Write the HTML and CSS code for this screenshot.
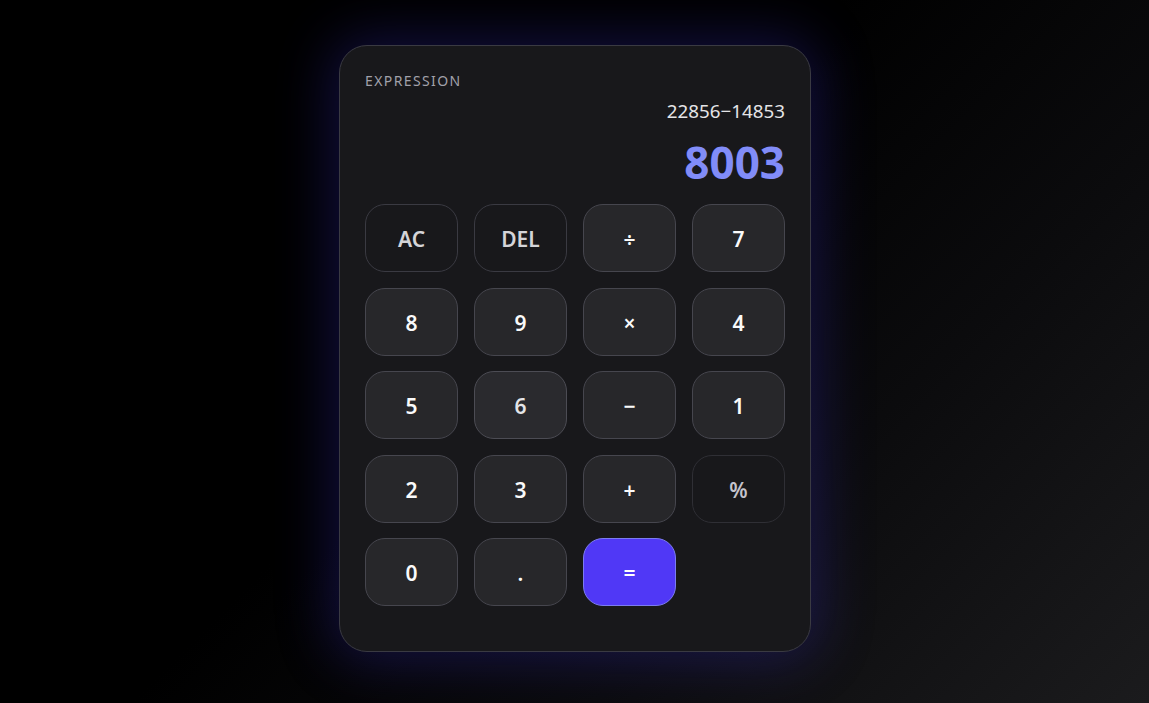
FILE: index.html
```html
<!DOCTYPE html>
<html lang="en">
<head>
<meta charset="utf-8">
<title>Calculator</title>
<link rel="stylesheet" href="styles.css">
</head>
<body>
<main class="calc">
  <section class="display">
    <div class="label">EXPRESSION</div>
    <div class="expr">22856−14853</div>
    <div class="result">8003</div>
  </section>
  <section class="keys">
    <button class="key key-fn">AC</button>
    <button class="key key-fn">DEL</button>
    <button class="key key-op">÷</button>
    <button class="key">7</button>
    <button class="key">8</button>
    <button class="key">9</button>
    <button class="key key-op">×</button>
    <button class="key">4</button>
    <button class="key">5</button>
    <button class="key key-hover">6</button>
    <button class="key key-op">−</button>
    <button class="key">1</button>
    <button class="key">2</button>
    <button class="key">3</button>
    <button class="key key-op">+</button>
    <button class="key key-fn key-pct">%</button>
    <button class="key">0</button>
    <button class="key">.</button>
    <button class="key key-eq">=</button>
  </section>
</main>
</body>
</html>
```
FILE: styles.css
```css
* { box-sizing: border-box; }
html, body { margin: 0; height: 100%; }
body {
  font-family: "Noto Sans", "Open Sans", sans-serif;
  background: linear-gradient(135deg, #000 0%, #000 45%, #0b0b0d 70%, #1b1b1d 100%);
  display: flex;
  justify-content: center;
  align-items: flex-start;
  padding-top: 45px;
  overflow: hidden;
}
.calc {
  width: 472px;
  margin-left: 1px;
  background: #18181b;
  border: 1px solid #3a3a42;
  border-radius: 28px;
  padding: 24px 25px 45px 25px;
  box-shadow: 0 0 55px 8px rgba(60, 50, 210, 0.3);
}
.display {
  display: flex;
  flex-direction: column;
  align-items: stretch;
}
.label {
  font-size: 14px;
  letter-spacing: 1.4px;
  color: #a1a1aa;
  line-height: 20px;
  margin-top: 1px;
}
.expr {
  text-align: right;
  font-size: 18.8px;
  color: #e4e4e7;
  line-height: 24px;
  margin-top: 8px;
}
.result {
  text-align: right;
  font-size: 44px;
  font-weight: 700;
  color: #818cf8;
  line-height: 52px;
  margin-top: 13px;
}
.keys {
  margin-top: 16px;
  display: grid;
  grid-template-columns: repeat(4, 1fr);
  column-gap: 16px;
  row-gap: 15.5px;
}
.key {
  height: 68px;
  border-radius: 20px;
  border: 1px solid #46464e;
  background: #27272a;
  color: #fafafa;
  font-family: inherit;
  font-size: 21px;
  font-weight: 600;
  padding: 2px 0 0;
}
.key-fn {
  background: #18181b;
  color: #d4d4d8;
  border-color: #3a3a42;
}
.key-pct {
  color: #c4c4cc;
  border-color: #2f2f35;
}
.key-op { font-size: 21px; }
.key-hover {
  background: #2a2a2e;
  border-color: #4c4c54;
  color: #e4e4e7;
}
.key-eq {
  background: #5038f6;
  border-color: #7c7cf0;
  color: #fff;
}
```
